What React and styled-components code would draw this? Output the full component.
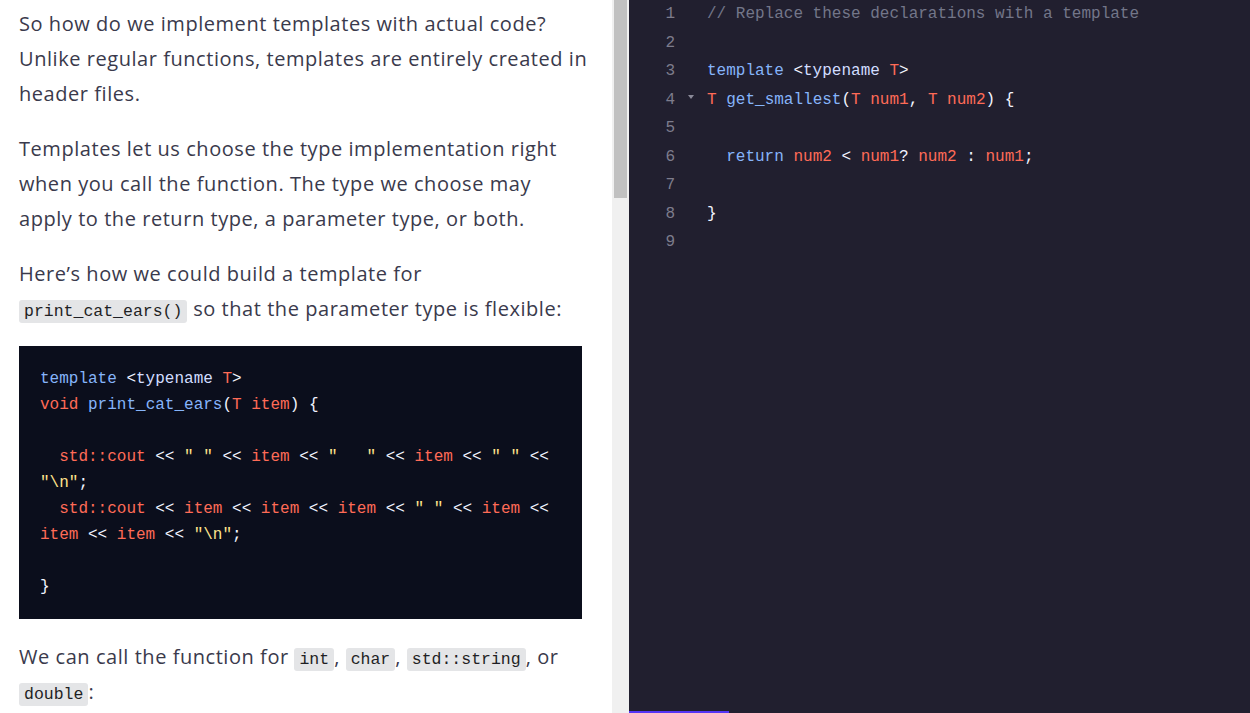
import React from "react";
import styled, { createGlobalStyle } from "styled-components";

const colors = {
  kw: "#86b4fa",
  tn: "#d2ddff",
  red: "#ff6b57",
  op: "#f2f4ff",
  str: "#ffe38c",
  cm: "#737689",
};

const GlobalStyle = createGlobalStyle`
  html, body {
    margin: 0;
    padding: 0;
    height: 100%;
    overflow: hidden;
  }
  #root {
    height: 100%;
  }
`;

const Page = styled.div`
  display: flex;
  width: 1250px;
  height: 713px;
  background: #ffffff;
`;

const Article = styled.div`
  width: 612px;
  box-sizing: border-box;
  padding: 6px 23px 0 19px;
  overflow: hidden;
  font-family: "Open Sans", "Noto Sans", sans-serif;
  font-size: 20px;
  letter-spacing: 0.55px;
  line-height: 35px;
  color: #3a3a4c;
`;

const Para = styled.p`
  margin: 0 0 20px;
`;

const InlineCode = styled.code`
  font-family: "Liberation Mono", monospace;
  font-size: 16.5px;
  letter-spacing: 0;
  line-height: 20px;
  color: #1f1f24;
  background: #e4e5e7;
  border-radius: 3px;
  padding: 2px 5px;
`;

const CodeBlock = styled.pre`
  width: 563px;
  box-sizing: border-box;
  margin: 0 0 20px;
  padding: 20px 21px 19px;
  background: #0b0e1c;
  font-family: "Liberation Mono", monospace;
  font-size: 16px;
  letter-spacing: 0;
  line-height: 26px;
  color: ${colors.op};
  white-space: pre-wrap;
  word-break: normal;
`;

const Tok = styled.span`
  color: ${(p) => colors[p.$c] || colors.op};
`;

const ScrollTrack = styled.div`
  width: 17px;
  background: #f0f0f0;
  display: flex;
  justify-content: center;
`;

const ScrollThumb = styled.div`
  width: 13px;
  height: 198px;
  background: #c1c1c1;
`;

const Editor = styled.div`
  flex: 1;
  background: #211f2f;
  display: flex;
  flex-direction: column;
  font-family: "Liberation Mono", monospace;
  font-size: 16px;
`;

const Lines = styled.div`
  flex: 1;
`;

const Line = styled.div`
  display: flex;
  height: 28.5px;
  line-height: 28.5px;
  white-space: pre;
`;

const LineNo = styled.span`
  width: 46px;
  text-align: right;
  color: #7d7c8c;
`;

const Fold = styled.span`
  width: 32px;
  display: flex;
  justify-content: center;
  align-items: center;
  padding-bottom: 6px;
  box-sizing: border-box;
`;

const ActiveBar = styled.div`
  width: 100px;
  height: 2px;
  background: #5634f5;
`;

const renderToks = (toks) =>
  toks.map(([t, c], i) => (
    <Tok key={i} $c={c}>
      {t}
    </Tok>
  ));

const sample = [
  [["template", "kw"], [" <", "op"], ["typename ", "tn"], ["T", "red"], [">", "op"]],
  [["void", "red"], [" "], ["print_cat_ears", "kw"], ["(", "op"], ["T", "red"], [" "], ["item", "red"], [") {", "op"]],
  [],
  [
    ["  std::cout", "red"], [" << "], ['" "', "str"], [" << "], ["item", "red"], [" << "],
    ['"   "', "str"], [" << "], ["item", "red"], [" << "], ['" "', "str"], [" << "],
    ['"\\n"', "str"], [";"],
  ],
  [
    ["  std::cout", "red"], [" << "], ["item", "red"], [" << "], ["item", "red"], [" << "],
    ["item", "red"], [" << "], ['" "', "str"], [" << "], ["item", "red"], [" << "],
    ["item", "red"], [" << "], ["item", "red"], [" << "], ['"\\n"', "str"], [";"],
  ],
  [],
  [["}"]],
];

const editorLines = [
  [["// Replace these declarations with a template", "cm"]],
  [],
  [["template", "kw"], [" <", "op"], ["typename ", "tn"], ["T", "red"], [">", "op"]],
  [["T", "red"], [" "], ["get_smallest", "kw"], ["(", "op"], ["T", "red"], [" "], ["num1", "red"], [", "], ["T", "red"], [" "], ["num2", "red"], [") {"]],
  [],
  [["  return", "kw"], [" "], ["num2", "red"], [" < "], ["num1", "red"], ["? "], ["num2", "red"], [" : "], ["num1", "red"], [";"]],
  [],
  [["}"]],
  [],
];

const FoldArrow = () => (
  <svg width="6" height="4" viewBox="0 0 6 4">
    <path d="M0 0 L6 0 L3 4 Z" fill="#8a8998" />
  </svg>
);

export default function App() {
  return (
    <Page>
      <GlobalStyle />
      <Article>
        <Para>
          So how do we implement templates with actual code? Unlike regular
          functions, templates are entirely created in header files.
        </Para>
        <Para>
          Templates let us choose the type implementation right when you call
          the function. The type we choose may apply to the return type, a
          parameter type, or both.
        </Para>
        <Para>
          Here’s how we could build a template for{" "}
          <InlineCode>print_cat_ears()</InlineCode> so that the parameter type
          is flexible:
        </Para>
        <CodeBlock>
          {sample.map((toks, i) => (
            <React.Fragment key={i}>
              {renderToks(toks)}
              {i < sample.length - 1 ? "\n" : ""}
            </React.Fragment>
          ))}
        </CodeBlock>
        <Para>
          We can call the function for <InlineCode>int</InlineCode>,{" "}
          <InlineCode>char</InlineCode>, <InlineCode>std::string</InlineCode>,
          or <InlineCode>double</InlineCode>:
        </Para>
      </Article>
      <ScrollTrack>
        <ScrollThumb />
      </ScrollTrack>
      <Editor>
        <Lines>
          {editorLines.map((toks, i) => (
            <Line key={i}>
              <LineNo>{i + 1}</LineNo>
              <Fold>{i === 3 ? <FoldArrow /> : null}</Fold>
              <span>{renderToks(toks)}</span>
            </Line>
          ))}
        </Lines>
        <ActiveBar />
      </Editor>
    </Page>
  );
}
